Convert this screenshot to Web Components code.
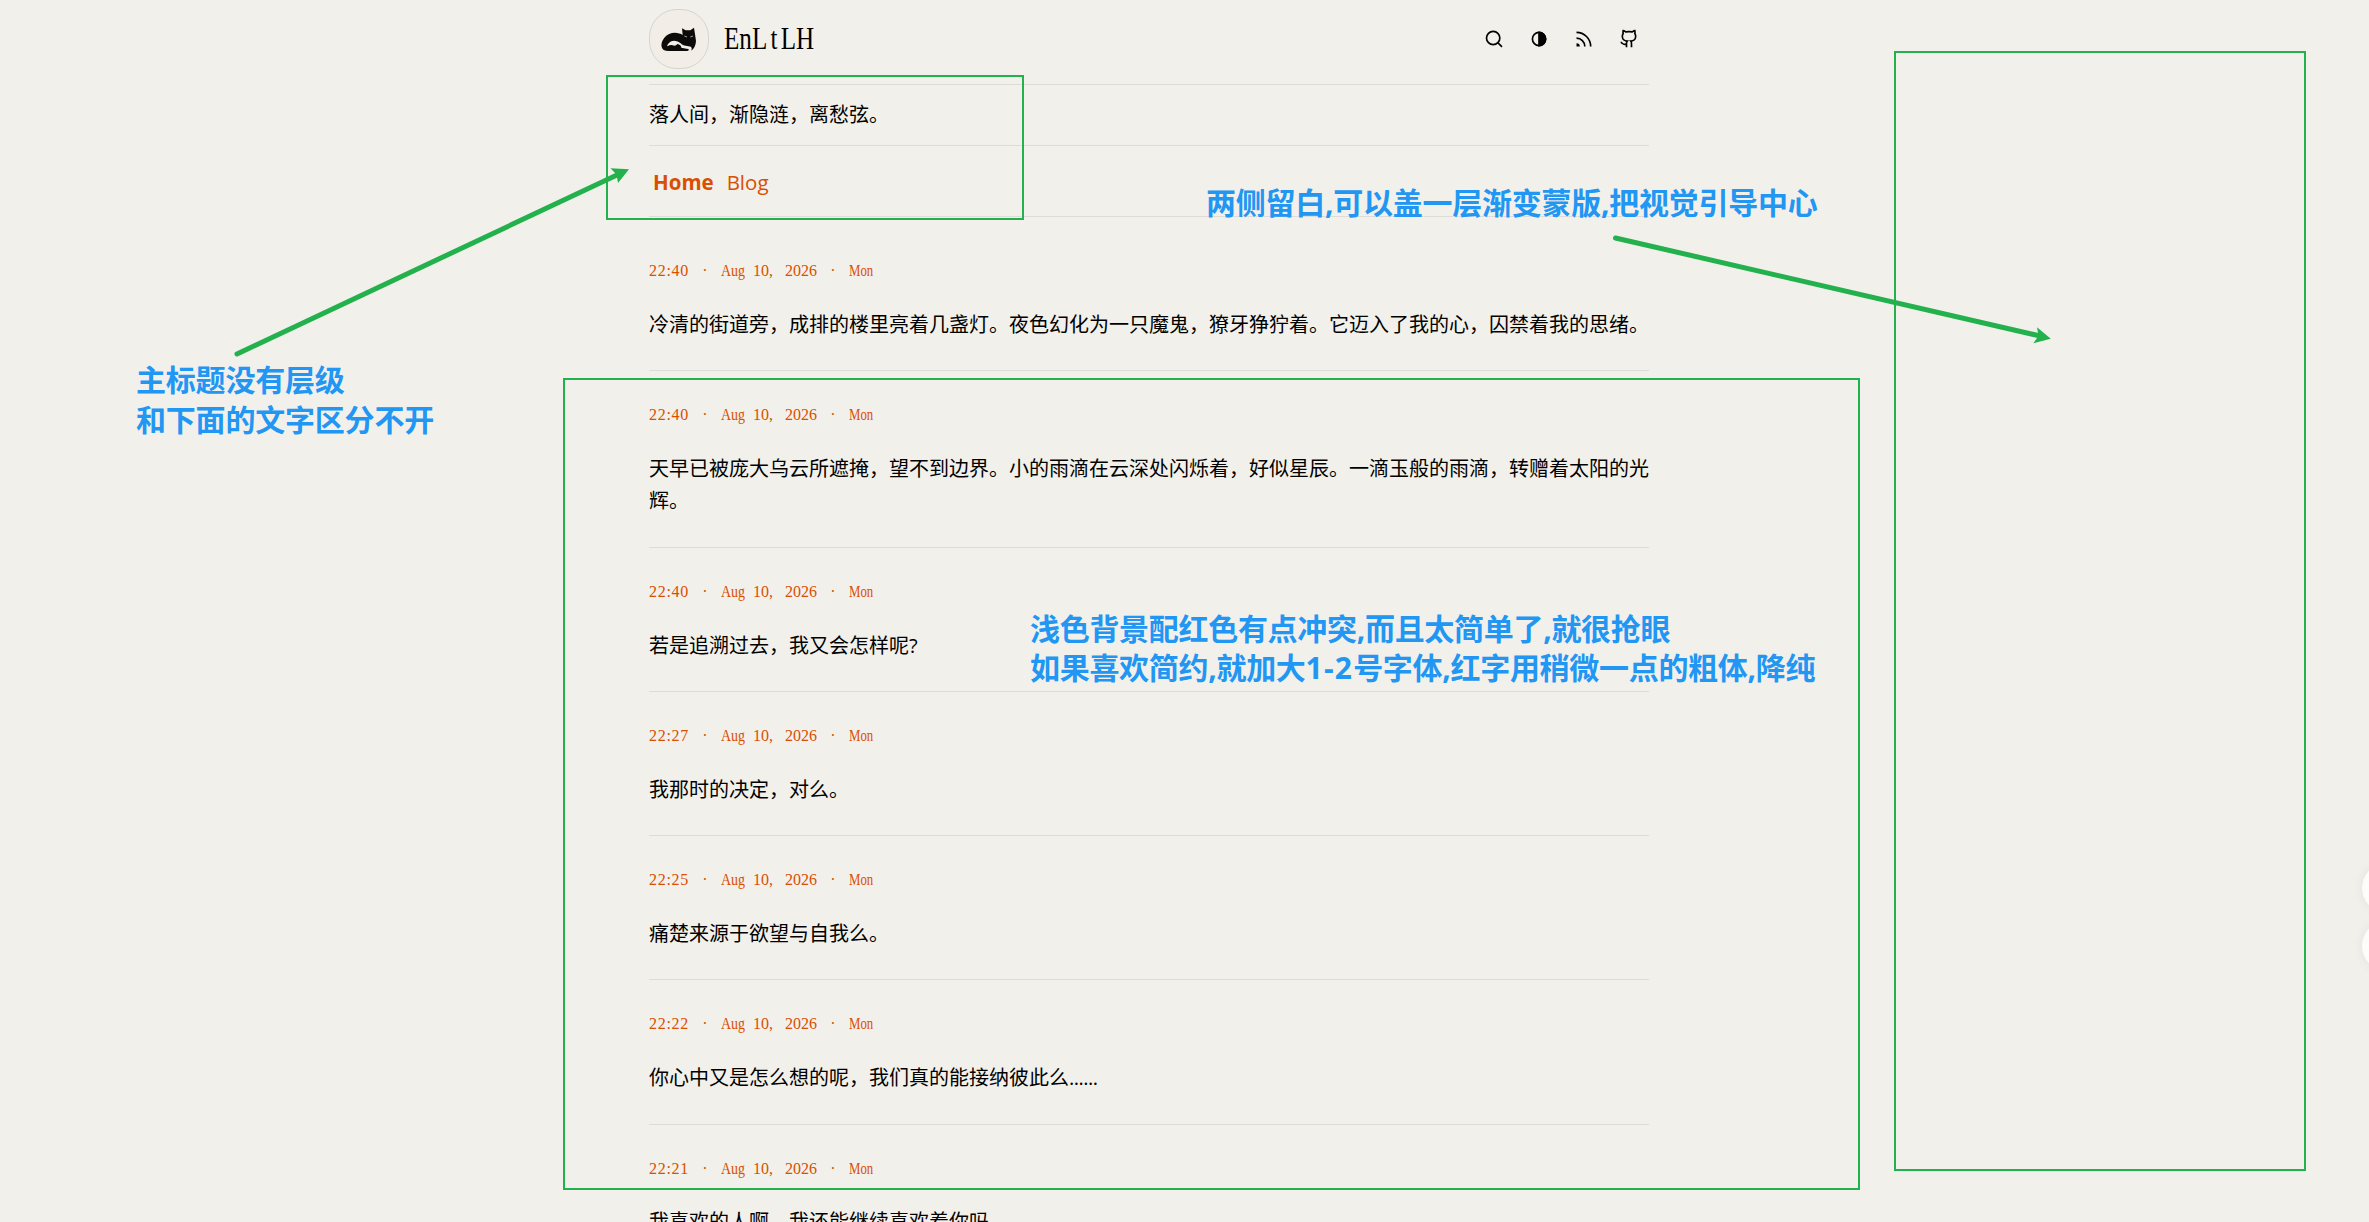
<!DOCTYPE html>
<html lang="zh-CN">
<head>
<meta charset="utf-8">
<title>EnLtLH</title>
<style>
  html, body {
    margin: 0;
    height: 1222px;
    overflow: hidden;
    background: #f2f0eb;
  }
</style>
</head>
<body>
<blog-page>
  <blog-header name="EnLtLH"></blog-header>
  <blog-motto>落人间，渐隐涟，离愁弦。</blog-motto>
  <blog-nav></blog-nav>
  <blog-post first time="22:40">冷清的街道旁，成排的楼里亮着几盏灯。夜色幻化为一只魔鬼，獠牙狰狞着。它迈入了我的心，囚禁着我的思绪。</blog-post>
  <blog-post time="22:40">天早已被庞大乌云所遮掩，望不到边界。小的雨滴在云深处闪烁着，好似星辰。一滴玉般的雨滴，转赠着太阳的光辉。</blog-post>
  <blog-post time="22:40">若是追溯过去，我又会怎样呢?</blog-post>
  <blog-post time="22:27">我那时的决定，对么。</blog-post>
  <blog-post time="22:25">痛楚来源于欲望与自我么。</blog-post>
  <blog-post time="22:22">你心中又是怎么想的呢，我们真的能接纳彼此么<span style="letter-spacing:-.5px">......</span></blog-post>
  <blog-post time="22:21">我喜欢的人啊，我还能继续喜欢着你吗</blog-post>
</blog-page>
<review-layer>
  <review-note style="left:136px; top:360px; --line:40px">主标题没有层级<br>和下面的文字区分不开</review-note>
  <review-note style="left:1206px; top:183px; --track:-0.25px">两侧留白,可以盖一层渐变蒙版,把视觉引导中心</review-note>
  <review-note style="left:1030px; top:609px; --line:39px; --track:-0.3px">浅色背景配红色有点冲突,而且太简单了,就很抢眼<br>如果喜欢简约,就加大<span style="letter-spacing:1.2px">1-2</span>号字体,红字用稍微一点的粗体,降纯</review-note>
</review-layer>
<float-buttons></float-buttons>

<script>
class BaseElement extends HTMLElement {
  constructor() {
    super();
    this.attachShadow({ mode: 'open' });
  }

  connectedCallback() {
    this.shadowRoot.innerHTML = this.render();
  }
}

// centered reading column
class BlogPage extends BaseElement {
  render() {
    return `
      <style>
        :host {
          display: flex;
          flex-direction: column;
          width: 1000px;
          height: 1222px;
          margin-left: 649px;
          overflow: hidden;
          color: #000;
          font: 20px/32.4px "Open Sans", "Noto Sans CJK SC", sans-serif;
          --line-color: #dddcd8;
          --accent: #d94f00;
        }
        ::slotted(*) { flex: none; }
      </style>
      <slot></slot>`;
  }
}

class BlogHeader extends BaseElement {
  render() {
    return `
      <style>
        :host {
          display: flex;
          align-items: center;
          height: 84px;
          box-sizing: border-box;
        }
        .logo {
          width: 60px;
          height: 60px;
          margin-bottom: 6px;
          box-sizing: border-box;
          border: 1px solid #d6d4d0;
          border-radius: 28px;
          background: #f2ede6;
          overflow: hidden;
        }
        .logo svg { display: block; margin: -1px; }
        .name {
          margin: 0 auto 6px 15px;
          font: 31px/40px "Liberation Serif", serif;
          transform: scaleX(.81);
          transform-origin: 0 50%;
          white-space: nowrap;
        }
        .name i { font-style: normal; margin: 0 4px; }
        .tools {
          display: flex;
          gap: 25px;
          margin: 0 10px 6px 0;
        }
        .tools svg {
          width: 20px;
          height: 20px;
          fill: none;
          stroke: #000;
          stroke-width: 2;
        }
      </style>
      <div class="logo">
        <svg width="60" height="60" viewBox="12 12 180 180">
          <path fill="#0c0b09" d="M113 90C100 80 72 79 58 98C46 113 47 130 58 136Q62 138 70 138H127Q134 136 130 132Q121 130 109 128Q108 119 97 117Q92 125 83 121Q76 118 68 124Q65 123 69 117Q76 107 88 107Q99 107 107 115Q113 123 138 125Q142 130 139 137Q152 127 153 108L150 88L147 68L136 76H122L111 70Z"/>
          <path d="M118 93l8 3M136 96l8-3" stroke="#e9e4dc" stroke-width="2"/>
        </svg>
      </div>
      <div class="name">EnL<i>t</i>LH</div>
      <div class="tools">
        <svg viewBox="0 0 24 24"><circle cx="11" cy="10.8" r="8"/><path d="M16.8 16.6l4.8 4.8"/></svg>
        <svg viewBox="0 0 24 24"><circle cx="12" cy="12" r="7.9"/><path d="M12 4a8 8 0 0 1 0 16z" fill="#000"/></svg>
        <svg viewBox="0 0 24 24"><path d="M3 4a17 17 0 0 1 17 17M3 11a10 10 0 0 1 10 10"/><path d="M3 17v4h4a4 4 0 0 0-4-4z" fill="#000" stroke="none"/></svg>
        <svg viewBox="0 0 24 24"><path d="M15 22v-4a4.8 4.8 0 0 0-1-3.5c3 0 6-2 6-5.5.1-1.3-.3-2.500-1-3.500.3-1.150.3-2.350 0-3.500 0 0-1 0-3 1.500-2.640-.5-5.360-.5-8 0C6 2 5 2 5 2c-.3 1.150-.3 2.350 0 3.500A5.400 5.400 0 0 0 4 9c0 3.500 3 5.500 6 5.500-.4.5-.7 1-.85 1.650-.17.6-.22 1.230-.15 1.850v4M9 18c-4.500 2-5-2-7-2"/></svg>
      </div>`;
  }
}

class BlogMotto extends BaseElement {
  render() {
    return `
      <style>
        :host {
          display: flex;
          align-items: center;
          height: 61px;
          padding-top: 1px;
          box-sizing: border-box;
          border-top: 1px solid var(--line-color);
        }
      </style>
      <span><slot></slot></span>`;
  }
}

class BlogNav extends BaseElement {
  render() {
    return `
      <style>
        :host {
          display: flex;
          align-items: center;
          gap: 13px;
          height: 72px;
          box-sizing: border-box;
          padding: 3px 0 0 4px;
          border-top: 1px solid var(--line-color);
          border-bottom: 1px solid var(--line-color);
          color: var(--accent);
          font-size: 20.5px;
        }
        .active { font-weight: 700; }
      </style>
      <span class="active">Home</span>
      <span>Blog</span>`;
  }
}

class BlogPost extends BaseElement {
  render() {
    return `
      <style>
        :host {
          display: block;
          padding: 32px 0 29px;
          border-bottom: 1px solid var(--line-color);
        }
        :host([first]) { padding-top: 42px; }
        .date {
          display: flex;
          margin-bottom: 25.8px;
          color: var(--accent);
          font: 16px/24px "Liberation Serif", serif;
          white-space: pre;
        }
        .date span {
          flex: none;
          transform-origin: 0 50%;
        }
        .time { width: 40px; letter-spacing: .7px; }
        .dot { width: 32px; text-align: center; }
        .month { width: 32px; transform: scaleX(.87); }
        .day { width: 32px; }
        .year { width: 32px; }
        .week { transform: scaleX(.8); }
      </style>
      <div class="date"><span class="time">${this.getAttribute('time')}</span><span class="dot"> · </span><span class="month">Aug </span><span class="day">10, </span><span class="year">2026</span><span class="dot"> · </span><span class="week">Mon</span></div>
      <div><slot></slot></div>`;
  }
}

// frames and arrows drawn over the page
class ReviewLayer extends BaseElement {
  render() {
    return `
      <style>
        :host {
          position: absolute;
          inset: 0;
          overflow: hidden;
        }
        svg { display: block; }
      </style>
      <svg width="2369" height="1222" fill="none" stroke="#22b14c">
        <g stroke-width="2">
          <rect x="607" y="76" width="416" height="143"/>
          <rect x="564" y="379" width="1295" height="810"/>
          <rect x="1895" y="52" width="410" height="1118"/>
        </g>
        <g stroke-width="5" stroke-linecap="round">
          <path d="M237 354L617 175"/>
          <path d="M1615.500 238L2038 335.500"/>
        </g>
        <g fill="#22b14c" stroke="none">
          <path d="M629 169.200L610.500 168.300L616.500 174.500L618 183Z"/>
          <path d="M2050.800 338.700L2037 327.300L2038.500 336L2033.300 343.200Z"/>
        </g>
      </svg>
      <slot></slot>`;
  }
}

class ReviewNote extends BaseElement {
  render() {
    return `
      <style>
        :host {
          position: absolute;
          color: #2196f3;
          font: 700 30px/var(--line, 40px) "Open Sans", "Noto Sans CJK SC", sans-serif;
          letter-spacing: var(--track, -0.2px);
          white-space: nowrap;
        }
      </style>
      <slot></slot>`;
  }
}

class FloatButtons extends BaseElement {
  render() {
    return `
      <style>
        :host {
          position: absolute;
          left: 2362px;
          top: 863px;
          width: 7px;
          height: 120px;
        }
        i {
          display: block;
          width: 50px;
          height: 50px;
          margin-bottom: 8px;
          border-radius: 50%;
          background: #fcfcfb;
          box-shadow: 0 0 12px rgba(0, 0, 0, .06);
        }
      </style>
      <i></i><i></i>`;
  }
}

customElements.define('blog-page', BlogPage);
customElements.define('blog-header', BlogHeader);
customElements.define('blog-motto', BlogMotto);
customElements.define('blog-nav', BlogNav);
customElements.define('blog-post', BlogPost);
customElements.define('review-layer', ReviewLayer);
customElements.define('review-note', ReviewNote);
customElements.define('float-buttons', FloatButtons);
</script>
</body>
</html>
